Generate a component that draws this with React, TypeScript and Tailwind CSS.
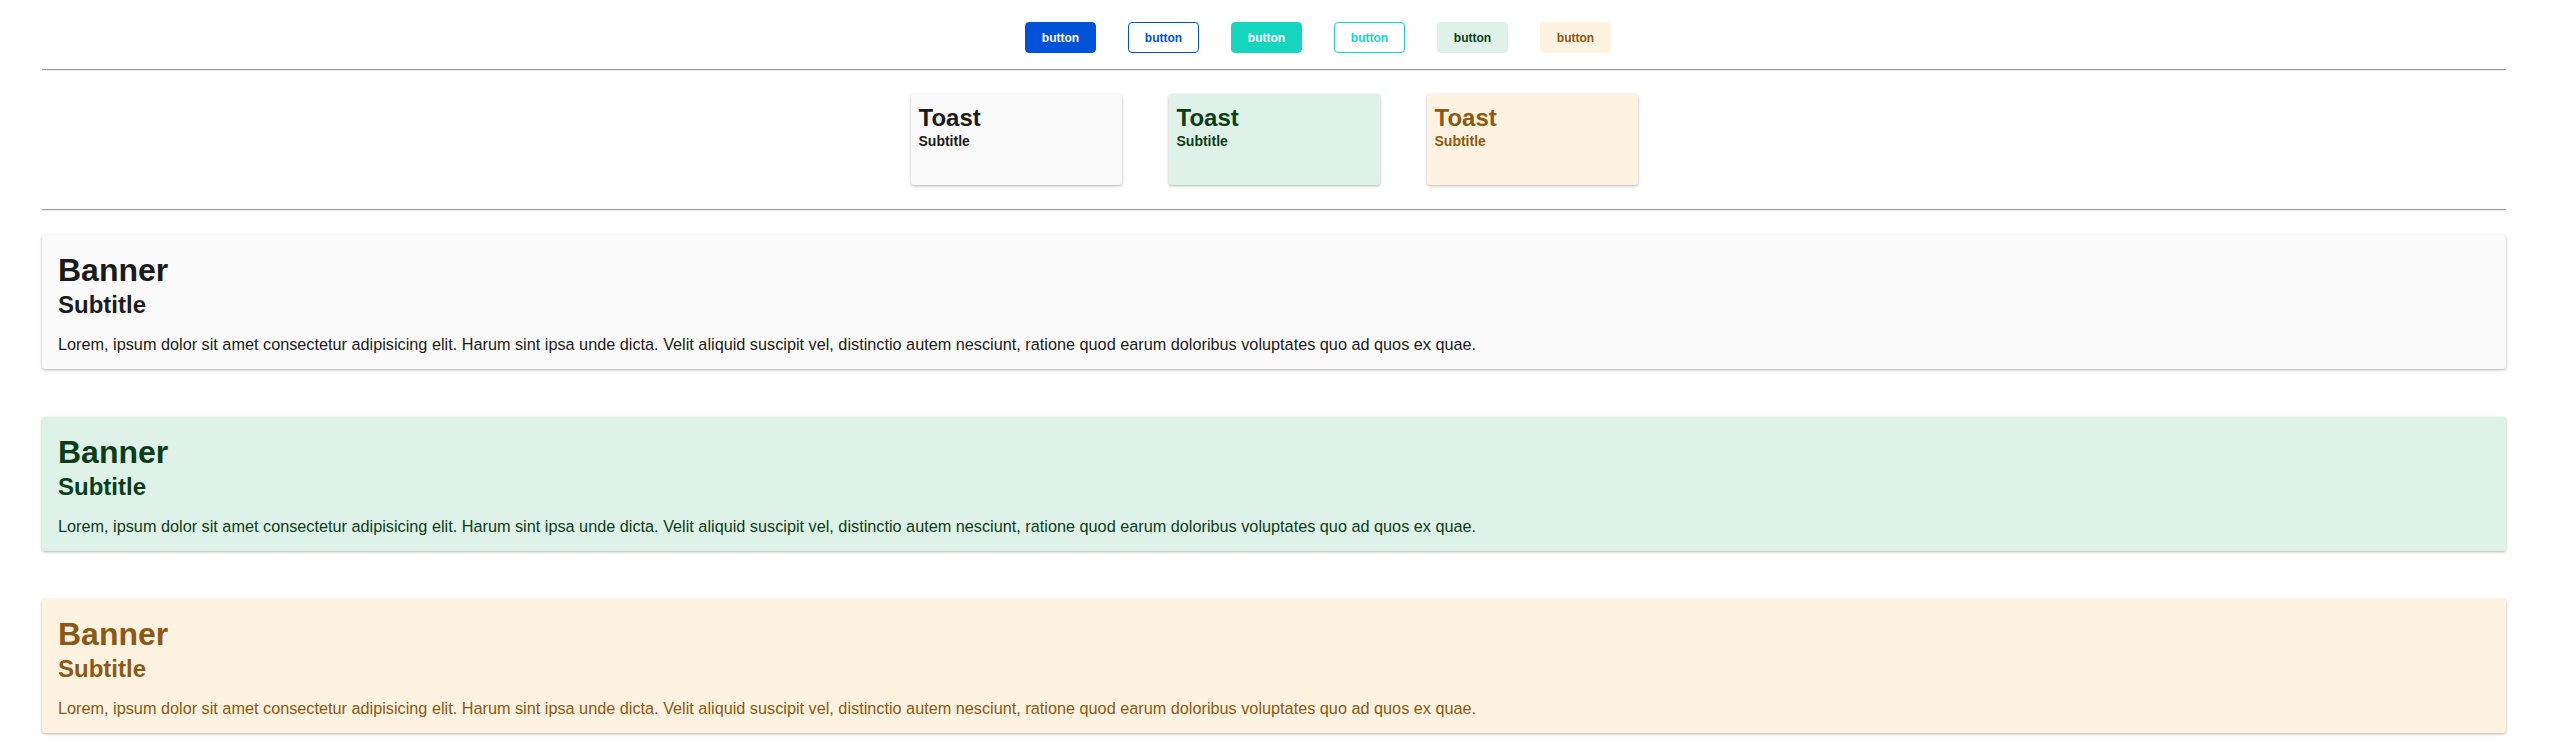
import React from "react";

const buttons = [
  "bg-[#0052d9] text-white border border-[#0052d9]",
  "bg-white text-[#0052d9] border border-[#0052d9]",
  "bg-[#16d5bf] text-white border border-[#16d5bf]",
  "bg-white text-[#16d5bf] border border-[#16d5bf]",
  "bg-[#def2ea] text-[#0b3d17] border border-[#def2ea]",
  "bg-[#fef3e0] text-[#8c5813] border border-[#fef3e0]",
];

const variants = [
  { bg: "bg-[#fafafa]", text: "text-[#1b1b1b]" },
  { bg: "bg-[#def2ea]", text: "text-[#0b3d17]" },
  { bg: "bg-[#fef3e0]", text: "text-[#8c5813]" },
];

const lorem =
  "Lorem, ipsum dolor sit amet consectetur adipisicing elit. Harum sint ipsa unde dicta. Velit aliquid suscipit vel, distinctio autem nesciunt, ratione quod earum doloribus voluptates quo ad quos ex quae.";

function Rule() {
  return <div className="h-0 border-t border-b border-t-[#999999] border-b-[#ececec]" />;
}

export default function App() {
  return (
    <div className="font-['Liberation_Sans',Arial,sans-serif] pl-[42px] pr-[48px] pt-[22px] pb-[12px] bg-white min-h-[745px]">
      <div className="flex justify-center gap-[32px] pl-[88px]">
        {buttons.map((c, i) => (
          <button
            key={i}
            className={`h-[31px] w-[71px] rounded-[4px] text-[12px] font-bold leading-none flex items-center justify-center ${c}`}
          >
            button
          </button>
        ))}
      </div>
      <div className="mt-[16px]">
        <Rule />
      </div>
      <div className="mt-[23px] flex justify-center gap-[47px]">
        {variants.map((v, i) => (
          <div
            key={i}
            className={`w-[211px] h-[91px] rounded-[3px] shadow-[0_1px_3px_rgba(0,0,0,0.3)] px-[8px] pt-[10px] ${v.bg} ${v.text}`}
          >
            <div className="text-[24px] font-bold leading-[27px]">Toast</div>
            <div className="text-[14px] font-bold leading-[16px] mt-[2px]">Subtitle</div>
          </div>
        ))}
      </div>
      <div className="mt-[24px]">
        <Rule />
      </div>
      <div className="mt-[24px] flex flex-col gap-[48px]">
        {variants.map((v, i) => (
          <div
            key={i}
            className={`h-[134px] rounded-[3px] shadow-[0_1px_3px_rgba(0,0,0,0.3)] px-[16px] pt-[17px] ${v.bg} ${v.text}`}
          >
            <div className="text-[32px] font-bold leading-[37px]">Banner</div>
            <div className="text-[24px] font-bold leading-[27px] mt-[2px]">Subtitle</div>
            <p className="text-[16.25px] leading-[18px] mt-[17px]">{lorem}</p>
          </div>
        ))}
      </div>
    </div>
  );
}
